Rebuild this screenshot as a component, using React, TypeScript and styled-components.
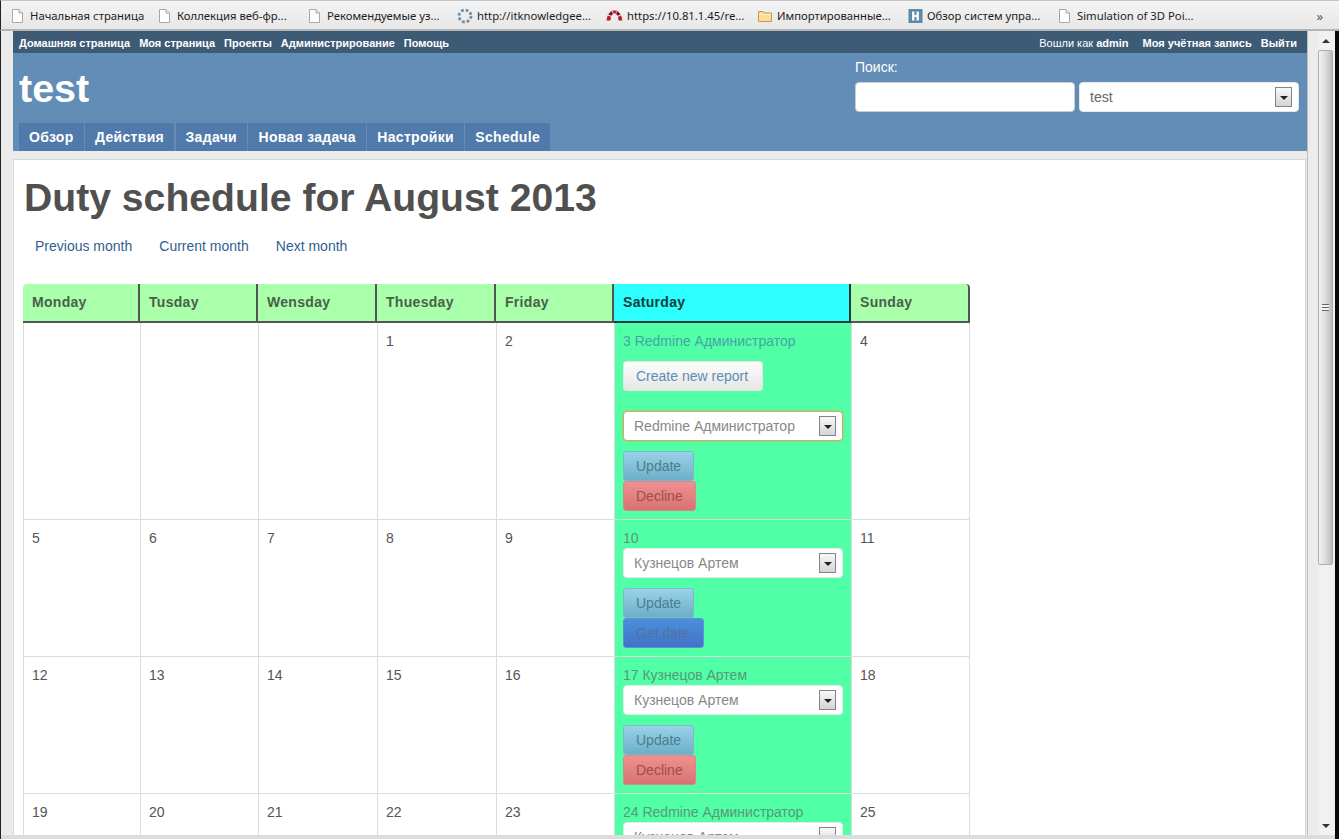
import React from "react";
import styled, { createGlobalStyle } from "styled-components";

const GlobalStyle = createGlobalStyle`
  html, body { margin: 0; padding: 0; overflow: hidden; background: #ebebeb; }
  body { font-family: "Liberation Sans", Arial, sans-serif; font-size: 14px; color: #555; }
`;

// browser chrome
const Screen = styled.div`
  width: 1339px;
  height: 839px;
  display: flex;
  flex-direction: column;
  overflow: hidden;
  background: #ebebeb;
`;

const BookmarkBar = styled.div`
  flex: 0 0 31px;
  box-sizing: border-box;
  display: flex;
  align-items: center;
  padding: 1px 0 0 10px;
  background: linear-gradient(#f4f4f4, #e7e7e7);
  border-top: 1px solid #c4c4c4;
  border-bottom: 2px solid #b4b4b4;
  border-left: 1px solid #222;
`;

const Bookmark = styled.div<{ $width: number }>`
  flex: 0 0 ${(p) => p.$width}px;
  display: flex;
  align-items: center;
  gap: 4px;
  font-family: "Noto Sans", sans-serif;
  font-size: 11.3px;
  color: #1c1c1c;
  white-space: nowrap;
`;

const Overflow = styled.div`
  margin-left: auto;
  padding-right: 16px;
  font-family: "Noto Sans", sans-serif;
  font-size: 13px;
  color: #555;
`;

const Viewport = styled.div`
  flex: 1;
  min-height: 0;
  display: flex;
  border-left: 1px solid #222;
  border-right: 4px solid #0a0a0a;
`;

const Page = styled.div`
  flex: 1;
  min-width: 0;
  padding-left: 12px;
  overflow: hidden;
`;

const Scrollbar = styled.div`
  flex: 0 0 28px;
  box-sizing: border-box;
  display: flex;
  flex-direction: column;
  align-items: flex-end;
  padding-right: 2px;
  background: linear-gradient(90deg, #ececec 0 11px, #f1f1f1 11px);
  border-left: 1px solid #bdbdbd;
`;

const ScrollArrow = styled.div<{ $down?: boolean }>`
  flex: 0 0 19px;
  width: 15px;
  display: flex;
  align-items: center;
  justify-content: center;
  ${(p) => p.$down && "margin-top: auto;"}
  &::before {
    content: "";
    border-left: 4px solid transparent;
    border-right: 4px solid transparent;
    ${(p) => (p.$down ? "border-top: 4px solid #333;" : "border-bottom: 4px solid #333;")}
  }
`;

const ScrollThumb = styled.div`
  height: 515px;
  width: 15px;
  box-sizing: border-box;
  display: flex;
  align-items: center;
  justify-content: center;
  background: linear-gradient(90deg, #f2f2f2, #dcdcdc 50%, #bdbdbd);
  border: 1px solid #aeaeae;
  border-radius: 2px;
`;

const ScrollGrip = styled.div`
  width: 7px;
  height: 7px;
  background: repeating-linear-gradient(#666 0 1px, #f4f4f4 1px 3px);
`;

const BottomEdge = styled.div`
  flex: 0 0 4px;
  background: #dcdcdc;
  border-left: 1px solid #222;
  border-right: 4px solid #0a0a0a;
`;

// redmine header
const TopMenu = styled.div`
  height: 22px;
  box-sizing: border-box;
  display: flex;
  align-items: center;
  justify-content: space-between;
  padding: 1px 10px 0 6px;
  background: #3e5b76;
  color: #fff;
  font-size: 11px;
  font-weight: bold;
`;

const MenuGroup = styled.div`
  display: flex;
  align-items: center;
  gap: 9px;
`;

const LoggedAs = styled.span`
  font-weight: normal;
  margin-right: 5px;
  b { font-weight: bold; }
`;

const Header = styled.div`
  height: 98px;
  box-sizing: border-box;
  display: flex;
  flex-direction: column;
  justify-content: space-between;
  padding: 0 8px 0 6px;
  background: #628db6;
  color: #fff;
`;

const HeaderRow = styled.div`
  display: flex;
  justify-content: space-between;
`;

const ProjectTitle = styled.div`
  font-size: 39.5px;
  line-height: 44px;
  font-weight: bold;
  margin-top: 13px;
`;

const Search = styled.div`
  padding-top: 6px;
`;

const SearchLabel = styled.div`
  font-size: 14px;
  line-height: 16px;
  margin-bottom: 7px;
`;

const SearchRow = styled.div`
  display: flex;
  gap: 4px;
`;

const TextInput = styled.input`
  width: 220px;
  height: 30px;
  box-sizing: border-box;
  border: 1px solid #ccc;
  border-radius: 4px;
  background: #fff;
`;

const SelectBox = styled.div<{ $focused?: boolean }>`
  width: 220px;
  height: 30px;
  box-sizing: border-box;
  display: flex;
  align-items: center;
  justify-content: space-between;
  padding: 0 6px 0 10px;
  background: #fff;
  color: #888;
  font-size: 14px;
  border: 1px solid ${(p) => (p.$focused ? "#d8a85a" : "#e8e8e8")};
  border-radius: 4px;
  ${(p) => p.$focused && "box-shadow: 0 0 2px #d8a85a;"}
`;

const ProjectSelect = styled(SelectBox)`
  color: #666;
`;

const SelectArrow = styled.div`
  width: 17px;
  height: 20px;
  box-sizing: border-box;
  display: flex;
  align-items: center;
  justify-content: center;
  background: linear-gradient(#f8f8f8, #d4d4d4);
  border: 1px solid #858585;
  &::before {
    content: "";
    margin-top: 1px;
    border-left: 4px solid transparent;
    border-right: 4px solid transparent;
    border-top: 4px solid #222;
  }
`;

const Tabs = styled.div`
  display: flex;
  gap: 1.5px;
`;

const Tab = styled.div`
  height: 28px;
  line-height: 28px;
  padding: 0 10px;
  background: #507aaa;
  color: #fff;
  font-size: 14px;
  font-weight: bold;
  letter-spacing: 0.3px;
`;

// main content
const Content = styled.div`
  margin: 8px 1px 0 0;
  padding: 0 9px;
  height: 800px;
  background: #fff;
  border: 1px solid #d7d7d7;
`;

const Title = styled.h1`
  margin: 18px 0 18px 1px;
  font-size: 39.15px;
  line-height: 40px;
  font-weight: bold;
  color: #505050;
`;

const MonthNav = styled.div`
  display: flex;
  gap: 3px;
  margin-bottom: 28px;
`;

const MonthLink = styled.a`
  padding: 0 12px;
  line-height: 20px;
  font-size: 14px;
  color: #2f5f8f;
`;

const Schedule = styled.table`
  width: 947px;
  table-layout: fixed;
  border-collapse: separate;
  border-spacing: 0;
`;

const HeadCell = styled.th<{ $today?: boolean }>`
  height: 39px;
  box-sizing: border-box;
  padding: 0 9px 2px;
  text-align: left;
  font-size: 14px;
  font-weight: bold;
  letter-spacing: 0.3px;
  background: ${(p) => (p.$today ? "#2dffff" : "#aaffaa")};
  color: ${(p) => (p.$today ? "#123c3c" : "#4a5f4a")};
  border-right: 2px solid ${(p) => (p.$today ? "#1c3c3c" : "#555")};
  border-bottom: 2px solid ${(p) => (p.$today ? "#1c3c3c" : "#555")};
  &:first-child { border-top-left-radius: 4px; }
  &:last-child { border-top-right-radius: 4px; }
`;

const DayCell = styled.td<{ $today?: boolean }>`
  box-sizing: border-box;
  padding: 8px;
  vertical-align: top;
  font-size: 14px;
  line-height: 20px;
  background: ${(p) => (p.$today ? "#50ffa6" : "#fff")};
  color: ${(p) => (p.$today ? "#5a9878" : "#555")};
  border-left: 1px solid #dcdcdc;
  border-bottom: 1px solid #dcdcdc;
  &:last-child { border-right: 1px solid #dcdcdc; }
`;

const DutyLink = styled.a`
  color: #45a5a5;
`;

const ActionButton = styled.div<{ $kind: "report" | "update" | "decline" | "date" }>`
  width: fit-content;
  height: 30px;
  box-sizing: border-box;
  padding: 0 12px;
  line-height: 28px;
  font-size: 14px;
  border-radius: 3px;
  ${(p) =>
    ({
      report: "min-width: 140px; background: linear-gradient(#fdfdfd, #e6e6e6); color: #5a8fb3; border: 1px solid #e4e4e4;",
      update: "background: linear-gradient(#9ad2e8, #6cafc8); color: #4a7e8e; border: 1px solid #7ab8ce;",
      decline: "background: linear-gradient(#ef9090, #d97272); color: #9c5050; border: 1px solid #dd8686;",
      date: "min-width: 81px; background: linear-gradient(#4a90dc, #4272c8); color: #54719c; border: 1px solid #5f92d2;",
    })[p.$kind]}
`;

const ReportRow = styled.div`
  margin: 10px 0 20px;
`;

const ActionStack = styled.div`
  margin-top: 10px;
`;

function PageIcon() {
  return (
    <svg width="15" height="16" viewBox="0 0 15 16" fill="none">
      <path d="M1.5 1.5h6.5l3.5 3.5v9.5h-10z" fill="#fff" stroke="#a8a8a8" />
      <path d="M8 1.5v3.5h3.5" fill="#e8e8e8" stroke="#a8a8a8" />
    </svg>
  );
}

function RingIcon() {
  return (
    <svg width="16" height="16" viewBox="0 0 16 16" fill="none">
      <circle cx="8" cy="8" r="6" stroke="#6f8fa8" strokeWidth="2.8" strokeDasharray="2.8 1.9" />
    </svg>
  );
}

function RedmineIcon() {
  return (
    <svg width="17" height="16" viewBox="0 0 17 16" fill="none">
      <path d="M0.5 12.5 L1.6 7.6 L5 8.8 L4.4 12.5z" fill="#c4161c" />
      <path d="M2.2 6.4 L5.2 3 L7 5.8 L5.4 7.8z" fill="#7e0f14" />
      <path d="M6.2 2.4 L10.8 2.4 L9.8 5.4 L7.6 5.4z" fill="#d3181f" />
      <path d="M11.6 3 L14.6 6.4 L11.6 7.8 L10 5.8z" fill="#7e0f14" />
      <path d="M15.2 7.6 L16.4 12.5 L12.6 12.5 L12 8.8z" fill="#c4161c" />
    </svg>
  );
}

function FolderIcon() {
  return (
    <svg width="16" height="16" viewBox="0 0 16 16" fill="none">
      <path d="M1.5 3.5h4.5l1.2 1.5h7.3v8.5h-13z" fill="#fbdc97" stroke="#c49a4c" />
      <path d="M2.5 6.5h11" stroke="#fff2cf" />
    </svg>
  );
}

function HBoxIcon() {
  return (
    <svg width="15" height="16" viewBox="0 0 15 16">
      <rect x="0.5" y="1" width="14" height="14" fill="#5b8ba8" />
      <path d="M4 3.5h2.5v3.5h2v-3.5h2.5v9h-2.5v-3.5h-2v3.5h-2.5z" fill="#f4f8fa" />
    </svg>
  );
}

const bookmarks = [
  { label: "Начальная страница", width: 147, icon: <PageIcon /> },
  { label: "Коллекция веб-фр...", width: 150, icon: <PageIcon /> },
  { label: "Рекомендуемые уз...", width: 149, icon: <PageIcon /> },
  { label: "http://itknowledgee...", width: 149, icon: <RingIcon /> },
  { label: "https://10.81.1.45/re...", width: 151, icon: <RedmineIcon /> },
  { label: "Импортированные...", width: 151, icon: <FolderIcon /> },
  { label: "Обзор систем упра...", width: 150, icon: <HBoxIcon /> },
  { label: "Simulation of 3D Poi...", width: 200, icon: <PageIcon /> },
];

const topLinks = ["Домашняя страница", "Моя страница", "Проекты", "Администрирование", "Помощь"];
const tabs = ["Обзор", "Действия", "Задачи", "Новая задача", "Настройки", "Schedule"];
const days = ["Monday", "Tusday", "Wensday", "Thuesday", "Friday", "Saturday", "Sunday"];
const columnWidths = [117, 118, 119, 119, 118, 237, 119];

type Week = {
  cells: string[];
  day: number;
  duty: string;
  selected: string;
  second: "decline" | "date";
  report?: boolean;
  last: string;
};

const weeks: Week[] = [
  {
    cells: ["", "", "", "1", "2"],
    day: 3,
    duty: "Redmine Администратор",
    selected: "Redmine Администратор",
    second: "decline",
    report: true,
    last: "4",
  },
  { cells: ["5", "6", "7", "8", "9"], day: 10, duty: "", selected: "Кузнецов Артем", second: "date", last: "11" },
  {
    cells: ["12", "13", "14", "15", "16"],
    day: 17,
    duty: "Кузнецов Артем",
    selected: "Кузнецов Артем",
    second: "decline",
    last: "18",
  },
  {
    cells: ["19", "20", "21", "22", "23"],
    day: 24,
    duty: "Redmine Администратор",
    selected: "Кузнецов Артем",
    second: "decline",
    last: "25",
  },
];

export default function App() {
  return (
    <Screen>
      <GlobalStyle />
      <BookmarkBar>
        {bookmarks.map((b) => (
          <Bookmark key={b.label} $width={b.width}>
            {b.icon}
            {b.label}
          </Bookmark>
        ))}
        <Overflow>»</Overflow>
      </BookmarkBar>

      <Viewport>
        <Page>
          <TopMenu>
            <MenuGroup>
              {topLinks.map((l) => (
                <span key={l}>{l}</span>
              ))}
            </MenuGroup>
            <MenuGroup>
              <LoggedAs>
                Вошли как <b>admin</b>
              </LoggedAs>
              <span>Моя учётная запись</span>
              <span>Выйти</span>
            </MenuGroup>
          </TopMenu>

          <Header>
            <HeaderRow>
              <ProjectTitle>test</ProjectTitle>
              <Search>
                <SearchLabel>Поиск:</SearchLabel>
                <SearchRow>
                  <TextInput />
                  <ProjectSelect>
                    test
                    <SelectArrow />
                  </ProjectSelect>
                </SearchRow>
              </Search>
            </HeaderRow>
            <Tabs>
              {tabs.map((t) => (
                <Tab key={t}>{t}</Tab>
              ))}
            </Tabs>
          </Header>

          <Content>
            <Title>Duty schedule for August 2013</Title>
            <MonthNav>
              <MonthLink>Previous month</MonthLink>
              <MonthLink>Current month</MonthLink>
              <MonthLink>Next month</MonthLink>
            </MonthNav>

            <Schedule>
              <colgroup>
                {columnWidths.map((w, i) => (
                  <col key={i} width={w} />
                ))}
              </colgroup>
              <thead>
                <tr>
                  {days.map((d) => (
                    <HeadCell key={d} $today={d === "Saturday"}>
                      {d}
                    </HeadCell>
                  ))}
                </tr>
              </thead>
              <tbody>
                {weeks.map((w) => (
                  <tr key={w.day}>
                    {w.cells.map((c, i) => (
                      <DayCell key={i}>{c}</DayCell>
                    ))}
                    <DayCell $today>
                      {w.report ? (
                        <DutyLink>
                          {w.day} {w.duty}
                        </DutyLink>
                      ) : (
                        <div>
                          {w.day} {w.duty}
                        </div>
                      )}
                      {w.report && (
                        <ReportRow>
                          <ActionButton $kind="report">Create new report</ActionButton>
                        </ReportRow>
                      )}
                      <SelectBox $focused={w.report}>
                        {w.selected}
                        <SelectArrow />
                      </SelectBox>
                      <ActionStack>
                        <ActionButton $kind="update">Update</ActionButton>
                        <ActionButton $kind={w.second}>{w.second === "date" ? "Get date" : "Decline"}</ActionButton>
                      </ActionStack>
                    </DayCell>
                    <DayCell>{w.last}</DayCell>
                  </tr>
                ))}
              </tbody>
            </Schedule>
          </Content>
        </Page>

        <Scrollbar>
          <ScrollArrow />
          <ScrollThumb>
            <ScrollGrip />
          </ScrollThumb>
          <ScrollArrow $down />
        </Scrollbar>
      </Viewport>
      <BottomEdge />
    </Screen>
  );
}
